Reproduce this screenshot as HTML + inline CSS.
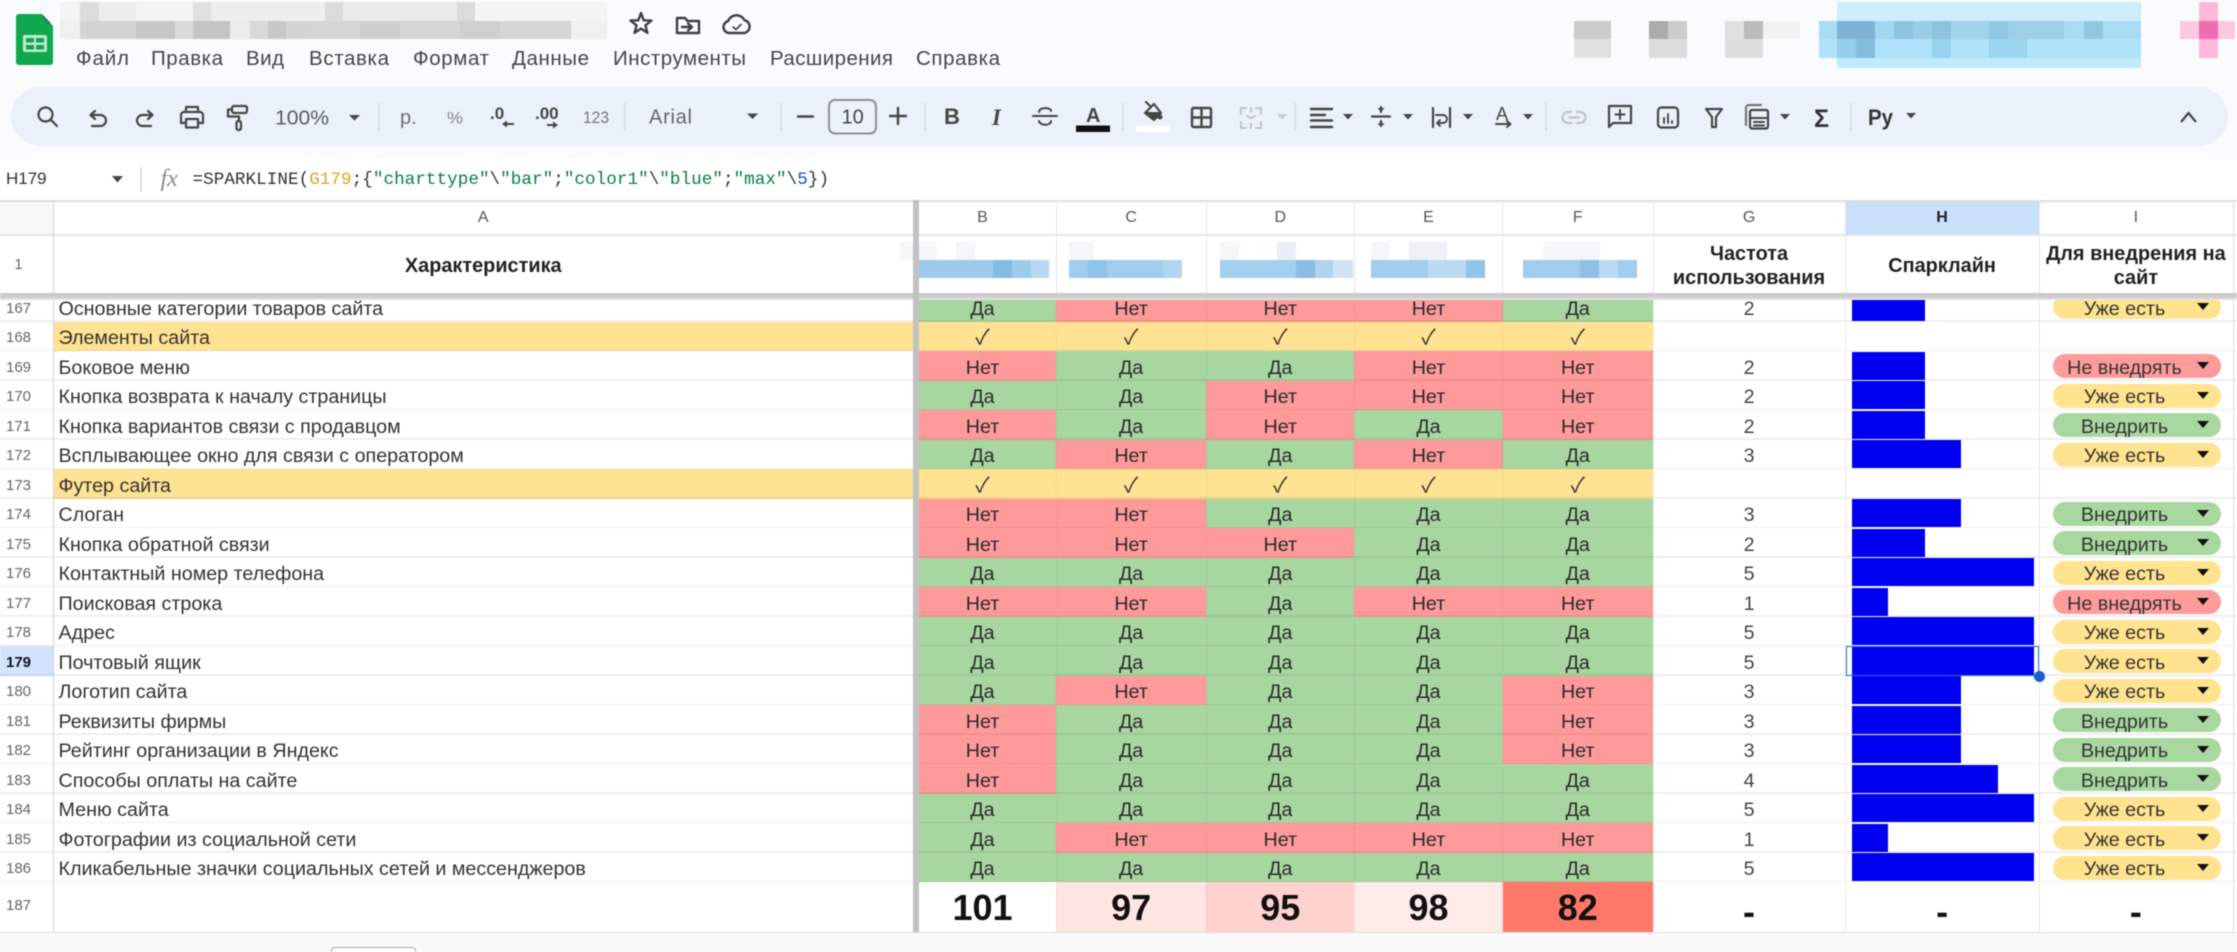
<!DOCTYPE html>
<html lang="ru">
<head>
<meta charset="utf-8">
<title>Таблица</title>
<style>
html,body{margin:0;padding:0;background:#fff;width:2237px;height:952px;overflow:hidden}
#p{position:relative;width:2237px;height:952px;overflow:hidden;background:#fff;font-family:"Liberation Sans","DejaVu Sans",sans-serif;color:#2a2a2a;filter:blur(.65px)}
svg{position:absolute;left:0;top:0}
svg text{font-family:"Liberation Sans","DejaVu Sans",sans-serif}
.r{position:absolute;left:0;width:2237px;height:29.5px;font-size:19.7px}
.r::after{content:"";position:absolute;left:0;bottom:0;width:2237px;height:1.5px;background:rgba(0,0,0,.065)}
.r>*{position:absolute;top:0;height:100%;display:flex;align-items:center;justify-content:center;text-decoration:none;font-style:normal;font-weight:normal;box-sizing:border-box;padding-top:5px}
.r>s{left:0;width:37px;font-size:15px;color:#666;padding-top:3px}
.r>u{left:53.5px;width:859.5px;justify-content:flex-start;padding-left:5px;color:#333}
.r>:nth-child(3){left:919px;width:137px;padding-right:10px}
.r>:nth-child(4){left:1056px;width:150.2px}
.r>:nth-child(5){left:1206.2px;width:148.2px}
.r>:nth-child(6){left:1354.4px;width:148.2px}
.r>:nth-child(7){left:1502.6px;width:150.3px}
.r>em{left:1652.9px;width:192.3px;color:#444}
.g{background:#a8d6a0}.x{background:#ff9a9a}.h{background:#ffe292}
b.h{font-family:"Noto Sans CJK JP","DejaVu Sans",sans-serif;font-size:21px;color:#333;padding-top:0}
.r>i{left:1851.6px;top:.5px;height:28px;background:#0000f0;padding:0}
.w1{width:36.5px}.w2{width:73px}.w3{width:109.5px}.w4{width:146px}.w5{width:182.4px}
.r>a{left:2053.3px;top:3px;width:167.4px;height:24px;border-radius:12px;padding-right:25px;padding-top:4.5px;color:#333}
.r>a::after{content:"";position:absolute;left:144px;top:8px;border-left:6.5px solid transparent;border-right:6.5px solid transparent;border-top:7px solid #111}
.py{background:#ffe38e}.pg{background:#a8d8a0}.pr{background:#ff9b9b}
.t{position:absolute;top:883.2px;height:49px;display:flex;align-items:center;justify-content:center;font-weight:bold;font-size:36px;color:#111}
.bg{position:absolute;top:882.2px;height:49.8px}
.l{position:absolute;background:rgba(0,0,0,.045);top:200px;width:1px;height:732px}
#hd{position:absolute;left:0;top:200px;width:2237px;height:93px;background:#fff}
.c{position:absolute;top:0;height:35px;display:flex;align-items:center;justify-content:center;font-size:16px;color:#555}
.hc{position:absolute;top:35px;height:58px;box-sizing:border-box;padding-top:3px;display:flex;align-items:center;justify-content:center;text-align:center;font-weight:bold;font-size:19.9px;line-height:24px;color:#222}
</style>
</head>
<body>
<div id="p">

<!-- top background -->
<div style="position:absolute;left:0;top:0;width:2237px;height:158px;background:#f9fbfd"></div>
<div style="position:absolute;left:11px;top:87px;width:2217px;height:59px;border-radius:30px;background:#ebf1fa"></div>

<svg width="2237" height="200" viewBox="0 0 2237 200">
  <!-- title mosaic -->
  <g>
    <rect x="60" y="2" width="547" height="19" fill="#f4f4f4"/>
    <rect x="80" y="2" width="19" height="19" fill="#dcdcdc"/>
    <rect x="99" y="2" width="37" height="19" fill="#ececec"/>
    <rect x="193" y="2" width="18" height="19" fill="#e0e0e0"/>
    <rect x="211" y="2" width="114" height="19" fill="#eeeeee"/>
    <rect x="325" y="2" width="18" height="19" fill="#dbdbdb"/>
    <rect x="343" y="2" width="114" height="19" fill="#eaeaea"/>
    <rect x="457" y="2" width="18" height="19" fill="#dbdbdb"/>
    <rect x="60" y="21" width="547" height="18" fill="#f0f0f0"/>
    <rect x="80" y="21" width="56" height="18" fill="#d4d4d4"/>
    <rect x="136" y="21" width="39" height="18" fill="#c8c8c8"/>
    <rect x="175" y="21" width="18" height="18" fill="#dadada"/>
    <rect x="193" y="21" width="37" height="18" fill="#c4c4c4"/>
    <rect x="230" y="21" width="20" height="18" fill="#ececec"/>
    <rect x="250" y="21" width="18" height="18" fill="#d9d9d9"/>
    <rect x="268" y="21" width="18" height="18" fill="#c8c8c8"/>
    <rect x="286" y="21" width="20" height="18" fill="#d4d4d4"/>
    <rect x="306" y="21" width="265" height="18" fill="#d5d5d5"/>
    <rect x="360" y="21" width="40" height="18" fill="#cecece"/>
    <rect x="460" y="21" width="40" height="18" fill="#cfcfcf"/>
  </g>
  <!-- logo -->
  <path d="M19 14H42L53 26V62a3 3 0 0 1-3 3H19a3 3 0 0 1-3-3V17a3 3 0 0 1 3-3z" fill="#10a84c"/>
  <path d="M43 17l7 7" stroke="#2c6a44" stroke-width="3" stroke-dasharray="2 1.5"/>
  <rect x="23" y="35" width="24" height="17" rx="2" fill="#bfe8cd"/>
  <rect x="26" y="38" width="8" height="4.5" fill="#10a84c"/><rect x="36" y="38" width="8" height="4.5" fill="#10a84c"/>
  <rect x="26" y="45" width="8" height="4.5" fill="#10a84c"/><rect x="36" y="45" width="8" height="4.5" fill="#10a84c"/>
  <!-- star folder cloud -->
  <g fill="none" stroke="#3c4043" stroke-width="2.4" stroke-linejoin="round" stroke-linecap="round">
    <path d="M641 13L643.7 20.3 651.5 20.6 645.4 25.4 647.5 32.9 641 28.6 634.5 32.9 636.6 25.4 630.5 20.6 638.3 20.3z"/>
    <path d="M677 18h8l2.5 3H699v12H677z"/>
    <path d="M682 27h10M688 23.5l4 3.5-4 3.500"/>
    <path d="M729 33a6 6 0 0 1-1-11.800a9 9 0 0 1 16.500-1a6.500 6.500 0 0 1-.5 12.800z"/>
    <path d="M733 27l3 2.500 5-5" stroke-width="1.6"/>
  </g>
  <!-- menu -->
  <g font-size="20.5" fill="#444746">
    <text x="76" y="65" textLength="53" lengthAdjust="spacing">Файл</text>
    <text x="151" y="65" textLength="72" lengthAdjust="spacing">Правка</text>
    <text x="246" y="65" textLength="38" lengthAdjust="spacing">Вид</text>
    <text x="309" y="65" textLength="80" lengthAdjust="spacing">Вставка</text>
    <text x="413" y="65" textLength="76" lengthAdjust="spacing">Формат</text>
    <text x="512" y="65" textLength="77" lengthAdjust="spacing">Данные</text>
    <text x="613" y="65" textLength="133" lengthAdjust="spacing">Инструменты</text>
    <text x="770" y="65" textLength="123" lengthAdjust="spacing">Расширения</text>
    <text x="916" y="65" textLength="84" lengthAdjust="spacing">Справка</text>
  </g>
  <!-- right mosaics -->
  <g transform="translate(-2,0)">
    <rect x="1576" y="21" width="37" height="18" fill="#cccccc"/><rect x="1576" y="39" width="37" height="19" fill="#e0e0e0"/>
    <rect x="1651" y="21" width="19" height="18" fill="#ababab"/><rect x="1670" y="21" width="19" height="18" fill="#cccccc"/><rect x="1651" y="39" width="38" height="19" fill="#dddddd"/>
    <rect x="1727" y="21" width="19" height="18" fill="#e0e0e0"/><rect x="1746" y="21" width="19" height="18" fill="#bbbbbb"/><rect x="1727" y="39" width="38" height="19" fill="#dddddd"/><rect x="1765" y="21" width="37" height="18" fill="#f2f2f2"/>
    <rect x="1839" y="2" width="304" height="19" fill="#cfeefd"/>
    <rect x="1821" y="21" width="322" height="18" fill="#a8dcf5"/>
    <rect x="1839" y="21" width="38" height="18" fill="#7fb3d5"/>
    <rect x="1877" y="21" width="19" height="18" fill="#a0d8f0"/>
    <rect x="1896" y="21" width="19" height="18" fill="#8cc3de"/>
    <rect x="1915" y="21" width="19" height="18" fill="#98cde8"/>
    <rect x="1934" y="21" width="19" height="18" fill="#8cc3de"/>
    <rect x="1953" y="21" width="38" height="18" fill="#a0d4ec"/>
    <rect x="1991" y="21" width="19" height="18" fill="#90c8e2"/>
    <rect x="2010" y="21" width="56" height="18" fill="#9ccfe8"/>
    <rect x="2086" y="21" width="19" height="18" fill="#8fc8e0"/>
    <rect x="1821" y="39" width="322" height="19" fill="#aee3fa"/>
    <rect x="1839" y="39" width="19" height="19" fill="#94cee8"/><rect x="1858" y="39" width="19" height="19" fill="#85bedc"/>
    <rect x="1934" y="39" width="19" height="19" fill="#98d3ee"/><rect x="1991" y="39" width="38" height="19" fill="#9cd6f0"/>
    <rect x="1839" y="58" width="304" height="10" fill="#c0ebfd"/>
    <rect x="2182" y="21" width="55" height="18" fill="#fbc9dc"/>
    <rect x="2201" y="2" width="19" height="56" fill="#ffb8dc"/>
    <rect x="2201" y="21" width="19" height="18" fill="#f06cb0"/>
  </g>

  <!-- toolbar icons -->
  <g fill="none" stroke="#444746" stroke-width="2.2" stroke-linecap="round" stroke-linejoin="round">
    <circle cx="45.500" cy="114.500" r="7"/><path d="M50.500 119.500L57 126"/>
    <path d="M95 111l-4.500 4 4.500 4M91 115h9.500a5.500 5.500 0 0 1 0 11H92"/>
    <path d="M148 111l4.500 4-4.500 4M152 115h-9.500a5.500 5.500 0 0 0 0 11h8.500"/>
    <path d="M186 112v-5h12v5M186 123h-5v-8a3 3 0 0 1 3-3h16a3 3 0 0 1 3 3v8h-5"/>
    <rect x="186" y="119" width="12" height="8.500"/>
    <rect x="232" y="106" width="15" height="7" rx="2"/>
    <path d="M232 109.500h-4v7h11v4"/><rect x="236.500" y="121" width="4.500" height="9" rx="2"/>
    <path d="M798 116.500h15M890 116h16M898 108v16" stroke-width="2.4"/>
    <rect x="829" y="100" width="47" height="33.500" rx="6" stroke="#8e9094" stroke-width="2"/>
    <!-- strike -->
    <path d="M1033 116h24M1039 112c0-5 12-5 12-1M1039 121c1 5 12 5 12 0" stroke-width="2"/>
    <!-- fill -->
    <path d="M1145 113l9-9 7 9-7 7z"/><path d="M1145 113h15" stroke-width="2"/><path d="M1146 102l4 4"/>
    <!-- borders -->
    <rect x="1192" y="108" width="19" height="19" rx="1.500" stroke-width="2.4"/><path d="M1201.500 108v19M1192 117.500h19" stroke-width="2.4"/>
    <!-- merge -->
    <g stroke="#c0c4c9" stroke-width="2"><path d="M1246 108h-5v6M1256 108h5v6M1246 128h-5v-6M1256 128h5v-6M1251 108v4M1251 124v4M1247 116l4 2 4-2"/></g>
    <!-- align -->
    <path d="M1311 109h21M1311 115h14M1311 120.500h21M1311 127h21" stroke-width="2.400"/>
    <!-- valign -->
    <path d="M1372 116.500h18M1381 107v5M1381 121v5" stroke-width="2.200"/>
    <!-- wrap -->
    <path d="M1433 108v19M1450 108v19" stroke-width="2.200"/><path d="M1436 115h7a3 3 0 0 1 0 8h-6M1440 120l-3 3 3 3" stroke-width="1.900"/>
    <!-- rotate underline -->
    <path d="M1496 124h14M1507 121l3.500 3-3.500 3" stroke-width="2"/>
    <!-- link -->
    <g stroke="#c0c4c9" stroke-width="2.200"><path d="M1571 112h-3a5.500 5.500 0 0 0 0 11h3M1577 112h3a5.500 5.500 0 0 1 0 11h-3M1569 117.500h10"/></g>
    <!-- comment -->
    <path d="M1609 106h22v17h-18l-4 4z"/><path d="M1620 110v9M1615.500 114.500h9" stroke-width="2"/>
    <!-- chart -->
    <rect x="1658" y="107.500" width="20" height="20" rx="3.500"/><path d="M1664 123v-5M1668 123v-9M1672 123v-2" stroke-width="1.900"/>
    <!-- filter -->
    <path d="M1706 109h16l-6 8v10h-4v-10z"/>
    <!-- calc -->
    <path d="M1746 125v-17a3 3 0 0 1 3-3h12" stroke="#777"/><rect x="1750" y="110" width="18" height="18.500" rx="2"/>
    <path d="M1750 118h18M1754 122h10M1754 125.500h10" stroke-width="2"/>
  </g>
  <!-- filled triangles -->
  <g fill="#444746">
    <path d="M349 115h11l-5.500 5.500z"/>
    <path d="M747 113.500h11l-5.500 5.500z"/>
    <path d="M1343 114h10l-5 5.500z"/><path d="M1403 114h10l-5 5.500z"/><path d="M1463 114h10l-5 5.500z"/><path d="M1523 114h10l-5 5.500z"/>
    <path d="M1780 114h10l-5 5.500z"/><path d="M1906 113h10l-5 5.500z"/>
    <path d="M1277 114h10l-5 5.500z" fill="#c8ccd1"/>
    <circle cx="1160" cy="117" r="2.500"/>
    <path d="M1145 113h15l-6 7z"/>
    <path d="M1381 112l-3.500-4h7zM1381 121l-3.500 4h7z"/>
    <path d="M502 124l5-3.500v2.500h7v2h-7v2.500z"/>
    <path d="M558 125l-5-3.500v2.500h-6v2h6v2.500z"/>
  </g>
  <path d="M2181 122l7.500-9 7.500 9" fill="none" stroke="#444746" stroke-width="2.200"/>
  <!-- separators -->
  <g stroke="#d4dae2" stroke-width="1.500">
    <path d="M379 103v28M625 103v28M781 103v28M925 103v28M1123 103v28M1295 103v28M1546 103v28M1851 103v28"/>
  </g>
  <!-- toolbar text -->
  <g fill="#5a5e62">
    <text x="275" y="124.500" font-size="20" textLength="54" lengthAdjust="spacingAndGlyphs">100%</text>
    <text x="400" y="124" font-size="20" fill="#6c6f73">р.</text>
    <text x="447" y="123.500" font-size="17" fill="#85888c" textLength="16" lengthAdjust="spacingAndGlyphs">%</text>
    <text x="490" y="119" font-size="17" font-weight="bold" fill="#444746">.0</text>
    <text x="535" y="119" font-size="17" font-weight="bold" fill="#444746">.00</text>
    <text x="583" y="123" font-size="17" fill="#777" textLength="26" lengthAdjust="spacingAndGlyphs">123</text>
    <text x="649" y="123.500" font-size="20" fill="#666" textLength="43" lengthAdjust="spacing">Arial</text>
    <text x="841.500" y="123.500" font-size="20" fill="#444746">10</text>
    <text x="944" y="124" font-size="22" font-weight="bold" fill="#444746">B</text>
    <text x="992" y="125" font-size="23" font-weight="bold" font-style="italic" fill="#444746" style="font-family:'Liberation Serif',serif">I</text>
    <text x="1086" y="122" font-size="20" font-weight="bold" fill="#444746">A</text>
    <text x="1496" y="120" font-size="18" fill="#444746">A</text>
    <text x="1814" y="127" font-size="25" font-weight="bold" fill="#333">Σ</text>
    <text x="1868" y="125" font-size="22" font-weight="bold" fill="#333" textLength="25" lengthAdjust="spacingAndGlyphs">Ру</text>
  </g>
  <rect x="1076" y="125.500" width="34" height="6.500" fill="#111"/>
  <rect x="1136" y="126" width="34" height="6" fill="#fff"/>

  <!-- formula bar -->
  <text x="6" y="184" font-size="17" fill="#333">H179</text>
  <path d="M112 176h11l-5.500 6.500z" fill="#444"/>
  <path d="M141 167v25" stroke="#d8d8d8" stroke-width="1.500"/>
  <text x="160.500" y="186" font-size="24" font-style="italic" fill="#8a8a8a" style="font-family:'Liberation Serif',serif">fx</text>
  <text x="192.500" y="184" font-size="17.600" fill="#333" textLength="636.500" lengthAdjust="spacing" style="font-family:'Liberation Mono',monospace">=SPARKLINE(<tspan fill="#e2a51c">G179</tspan>;{<tspan fill="#0b8043">"charttype"</tspan>\<tspan fill="#0b8043">"bar"</tspan>;<tspan fill="#0b8043">"color1"</tspan>\<tspan fill="#0b8043">"blue"</tspan>;<tspan fill="#0b8043">"max"</tspan>\<tspan fill="#1155cc">5</tspan>})</text>
</svg>

<!-- data rows -->
<div class="r" style="top:292.2px"><s>167</s><u>Основные категории товаров сайта</u><b class="g">Да</b><b class="x">Нет</b><b class="x">Нет</b><b class="x">Нет</b><b class="g">Да</b><em>2</em><i class="w2"></i><a class="py">Уже есть</a></div>
<div class="r" style="top:321.7px"><s>168</s><u class="h">Элементы сайта</u><b class="h">✓</b><b class="h">✓</b><b class="h">✓</b><b class="h">✓</b><b class="h">✓</b></div>
<div class="r" style="top:351.2px"><s>169</s><u>Боковое меню</u><b class="x">Нет</b><b class="g">Да</b><b class="g">Да</b><b class="x">Нет</b><b class="x">Нет</b><em>2</em><i class="w2"></i><a class="pr">Не внедрять</a></div>
<div class="r" style="top:380.7px"><s>170</s><u>Кнопка возврата к началу страницы</u><b class="g">Да</b><b class="g">Да</b><b class="x">Нет</b><b class="x">Нет</b><b class="x">Нет</b><em>2</em><i class="w2"></i><a class="py">Уже есть</a></div>
<div class="r" style="top:410.2px"><s>171</s><u>Кнопка вариантов связи с продавцом</u><b class="x">Нет</b><b class="g">Да</b><b class="x">Нет</b><b class="g">Да</b><b class="x">Нет</b><em>2</em><i class="w2"></i><a class="pg">Внедрить</a></div>
<div class="r" style="top:439.7px"><s>172</s><u>Всплывающее окно для связи с оператором</u><b class="g">Да</b><b class="x">Нет</b><b class="g">Да</b><b class="x">Нет</b><b class="g">Да</b><em>3</em><i class="w3"></i><a class="py">Уже есть</a></div>
<div class="r" style="top:469.2px"><s>173</s><u class="h">Футер сайта</u><b class="h">✓</b><b class="h">✓</b><b class="h">✓</b><b class="h">✓</b><b class="h">✓</b></div>
<div class="r" style="top:498.7px"><s>174</s><u>Слоган</u><b class="x">Нет</b><b class="x">Нет</b><b class="g">Да</b><b class="g">Да</b><b class="g">Да</b><em>3</em><i class="w3"></i><a class="pg">Внедрить</a></div>
<div class="r" style="top:528.2px"><s>175</s><u>Кнопка обратной связи</u><b class="x">Нет</b><b class="x">Нет</b><b class="x">Нет</b><b class="g">Да</b><b class="g">Да</b><em>2</em><i class="w2"></i><a class="pg">Внедрить</a></div>
<div class="r" style="top:557.7px"><s>176</s><u>Контактный номер телефона</u><b class="g">Да</b><b class="g">Да</b><b class="g">Да</b><b class="g">Да</b><b class="g">Да</b><em>5</em><i class="w5"></i><a class="py">Уже есть</a></div>
<div class="r" style="top:587.2px"><s>177</s><u>Поисковая строка</u><b class="x">Нет</b><b class="x">Нет</b><b class="g">Да</b><b class="x">Нет</b><b class="x">Нет</b><em>1</em><i class="w1"></i><a class="pr">Не внедрять</a></div>
<div class="r" style="top:616.7px"><s>178</s><u>Адрес</u><b class="g">Да</b><b class="g">Да</b><b class="g">Да</b><b class="g">Да</b><b class="g">Да</b><em>5</em><i class="w5"></i><a class="py">Уже есть</a></div>
<div class="r" style="top:646.2px"><s style="width:53.5px;padding-right:16.5px;background:#d3e3fd;color:#111;font-weight:bold">179</s><u>Почтовый ящик</u><b class="g">Да</b><b class="g">Да</b><b class="g">Да</b><b class="g">Да</b><b class="g">Да</b><em>5</em><i class="w5"></i><a class="py">Уже есть</a></div>
<div class="r" style="top:675.7px"><s>180</s><u>Логотип сайта</u><b class="g">Да</b><b class="x">Нет</b><b class="g">Да</b><b class="g">Да</b><b class="x">Нет</b><em>3</em><i class="w3"></i><a class="py">Уже есть</a></div>
<div class="r" style="top:705.2px"><s>181</s><u>Реквизиты фирмы</u><b class="x">Нет</b><b class="g">Да</b><b class="g">Да</b><b class="g">Да</b><b class="x">Нет</b><em>3</em><i class="w3"></i><a class="pg">Внедрить</a></div>
<div class="r" style="top:734.7px"><s>182</s><u>Рейтинг организации в Яндекс</u><b class="x">Нет</b><b class="g">Да</b><b class="g">Да</b><b class="g">Да</b><b class="x">Нет</b><em>3</em><i class="w3"></i><a class="pg">Внедрить</a></div>
<div class="r" style="top:764.2px"><s>183</s><u>Способы оплаты на сайте</u><b class="x">Нет</b><b class="g">Да</b><b class="g">Да</b><b class="g">Да</b><b class="g">Да</b><em>4</em><i class="w4"></i><a class="pg">Внедрить</a></div>
<div class="r" style="top:793.7px"><s>184</s><u>Меню сайта</u><b class="g">Да</b><b class="g">Да</b><b class="g">Да</b><b class="g">Да</b><b class="g">Да</b><em>5</em><i class="w5"></i><a class="py">Уже есть</a></div>
<div class="r" style="top:823.2px"><s>185</s><u>Фотографии из социальной сети</u><b class="g">Да</b><b class="x">Нет</b><b class="x">Нет</b><b class="x">Нет</b><b class="x">Нет</b><em>1</em><i class="w1"></i><a class="py">Уже есть</a></div>
<div class="r" style="top:852.7px"><s>186</s><u>Кликабельные значки социальных сетей и мессенджеров</u><b class="g">Да</b><b class="g">Да</b><b class="g">Да</b><b class="g">Да</b><b class="g">Да</b><em>5</em><i class="w5"></i><a class="py">Уже есть</a></div>

<!-- totals row -->
<div style="position:absolute;left:0;top:882.2px;width:37px;height:46px;display:flex;align-items:center;justify-content:center;font-size:15px;color:#666">187</div>
<div class="bg" style="left:1056px;width:150.2px;background:#ffe6e3"></div>
<div class="bg" style="left:1206.2px;width:148.2px;background:#ffd2cf"></div>
<div class="bg" style="left:1354.4px;width:148.2px;background:#ffebe9"></div>
<div class="bg" style="left:1502.6px;width:150.3px;background:#ff7869"></div>
<div class="t" style="left:919px;width:127px">101</div>
<div class="t" style="left:1056px;width:150.2px">97</div>
<div class="t" style="left:1206.2px;width:148.2px">95</div>
<div class="t" style="left:1354.4px;width:148.2px">98</div>
<div class="t" style="left:1502.6px;width:150.3px">82</div>
<div class="t" style="left:1652.9px;width:192.3px;padding-top:8px;height:42px">-</div>
<div class="t" style="left:1845.2px;width:193.8px;padding-top:8px;height:42px">-</div>
<div class="t" style="left:2039px;width:193.8px;padding-top:8px;height:42px">-</div>

<!-- grid lines -->
<div class="l" style="left:1056px"></div><div class="l" style="left:1206px"></div><div class="l" style="left:1354px"></div><div class="l" style="left:1502px"></div>
<div class="l" style="left:1653px;background:#ececec"></div>
<div class="l" style="left:1845px;background:#ececec"></div>
<div class="l" style="left:2039px;background:#e6e6e6"></div>
<div class="l" style="left:2233px;background:#e2e2e2"></div>
<div class="l" style="left:53px;background:#d4d4d4"></div>

<!-- frozen header -->
<div id="hd">
  <div style="position:absolute;left:0;top:0;width:53px;height:35px;background:#f8f8f8"></div>
  <div style="position:absolute;left:1845.2px;top:0;width:193.8px;height:35px;background:#c9e0fb"></div>
  <div class="c" style="left:53.500px;width:859.500px">A</div>
  <div class="c" style="left:919px;width:127px">B</div>
  <div class="c" style="left:1056px;width:150.2px">C</div>
  <div class="c" style="left:1206.2px;width:148.2px">D</div>
  <div class="c" style="left:1354.4px;width:148.2px">E</div>
  <div class="c" style="left:1502.6px;width:150.3px">F</div>
  <div class="c" style="left:1652.9px;width:192.3px">G</div>
  <div class="c" style="left:1845.2px;width:193.8px;color:#222;font-weight:bold">H</div>
  <div class="c" style="left:2039px;width:193.8px">I</div>
  <div style="position:absolute;left:0;top:0;width:2237px;height:1.500px;background:#dedede"></div>
  <div style="position:absolute;left:0;top:34px;width:2237px;height:2px;background:#e4e4e4"></div>
  <div style="position:absolute;left:0;top:35px;width:37px;height:58px;display:flex;align-items:center;justify-content:center;font-size:15px;color:#666">1</div>
  <div class="hc" style="left:53.500px;width:859.500px">Характеристика</div>
  <div class="hc" style="left:1652.9px;width:192.3px">Частота<br>использования</div>
  <div class="hc" style="left:1845.2px;width:193.8px">Спарклайн</div>
  <div class="hc" style="left:2039px;width:193.8px">Для внедрения на<br>сайт</div>
  <!-- vertical header lines -->
  <div style="position:absolute;left:53px;top:0;width:1px;height:93px;background:#d4d4d4"></div>
  <div style="position:absolute;left:1056px;top:0;width:1px;height:93px;background:#e6e6e6"></div>
  <div style="position:absolute;left:1206px;top:0;width:1px;height:93px;background:#e6e6e6"></div>
  <div style="position:absolute;left:1354px;top:0;width:1px;height:93px;background:#e6e6e6"></div>
  <div style="position:absolute;left:1502px;top:0;width:1px;height:93px;background:#e6e6e6"></div>
  <div style="position:absolute;left:1653px;top:0;width:1px;height:93px;background:#e6e6e6"></div>
  <div style="position:absolute;left:1845px;top:0;width:1px;height:93px;background:#e6e6e6"></div>
  <div style="position:absolute;left:2039px;top:0;width:1px;height:93px;background:#e6e6e6"></div>
  <div style="position:absolute;left:2233px;top:0;width:1px;height:93px;background:#e0e0e0"></div>
  <!-- blurred supplier names -->
  <svg width="2237" height="93" viewBox="0 0 2237 93" style="top:0;left:0">
    <g transform="translate(-1,0)">
    <g fill="#f4f6f9">
      <rect x="901" y="42" width="37" height="18"/><rect x="957" y="42" width="19" height="18"/>
      <rect x="1070" y="42" width="25" height="18"/><rect x="1221" y="42" width="19" height="18"/><rect x="1278" y="42" width="19" height="18" fill="#e8eff7"/>
      <rect x="1372" y="42" width="19" height="18"/><rect x="1410" y="42" width="38" height="18" fill="#eef2f7"/><rect x="1544" y="42" width="57" height="18"/>
    </g>
    <g>
      <rect x="919" y="60" width="131" height="18" fill="#9dcbee"/><rect x="994" y="60" width="19" height="18" fill="#86bbe4"/><rect x="1032" y="60" width="18" height="18" fill="#b6d8f2"/>
      <rect x="1070" y="60" width="113" height="18" fill="#a0cdee"/><rect x="1089" y="60" width="19" height="18" fill="#8ec2e8"/><rect x="1164" y="60" width="19" height="18" fill="#b3d6f0"/>
      <rect x="1221" y="60" width="133" height="18" fill="#a4cfee"/><rect x="1297" y="60" width="19" height="18" fill="#8abde4"/><rect x="1316" y="60" width="18" height="18" fill="#b0d3ee"/><rect x="1334" y="60" width="20" height="18" fill="#cfe3f5"/>
      <rect x="1372" y="60" width="114" height="18" fill="#a2cdee"/><rect x="1429" y="60" width="38" height="18" fill="#bcdaf2"/><rect x="1467" y="60" width="19" height="18" fill="#93c3e8"/>
      <rect x="1524" y="60" width="114" height="18" fill="#a0ccee"/><rect x="1581" y="60" width="19" height="18" fill="#8fc0e6"/><rect x="1600" y="60" width="19" height="18" fill="#bcd9f1"/>
    </g>
    </g>
  </svg>
</div>

<!-- freeze bars -->
<div style="position:absolute;left:0;top:293px;width:2237px;height:7px;background:linear-gradient(#c8c8c8,#d2d2d2 70%,#ececec)"></div>
<div style="position:absolute;left:913px;top:200px;width:6px;height:732px;background:#c2c2c2"></div>

<!-- selection -->
<div style="position:absolute;left:1845.5px;top:646px;width:193.5px;height:29.5px;border:1.5px solid #1a73e8;box-sizing:border-box"></div>
<div style="position:absolute;left:2034px;top:671px;width:11px;height:11px;border-radius:50%;background:#1a5fd0"></div>

<!-- bottom bar -->
<div style="position:absolute;left:0;top:932px;width:2237px;height:20px;background:#f8f9f8;border-top:1.5px solid #e2e2e2;box-sizing:border-box"></div>
<div style="position:absolute;left:331px;top:947px;width:85px;height:8px;background:#fff;border:1.5px solid #aaa;border-radius:4px 4px 0 0;box-sizing:border-box"></div>

</div>
</body>
</html>
